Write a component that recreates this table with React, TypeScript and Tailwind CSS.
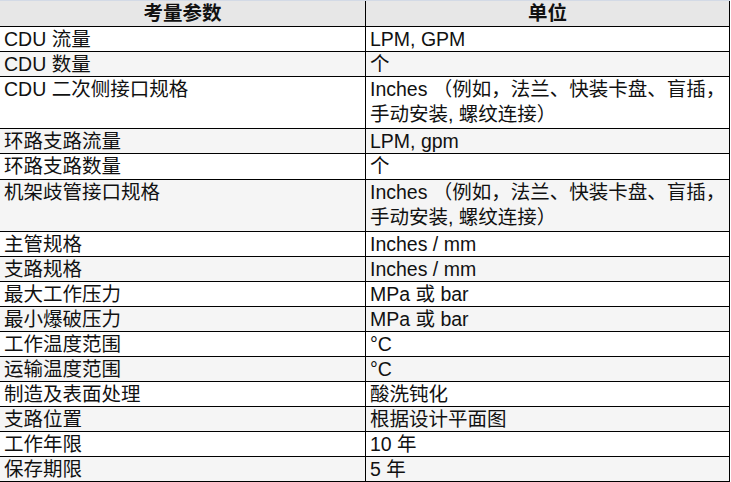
import { FC } from 'react';

// spec table: parameter / unit, rows alternate white and light gray
interface SpecRow {
  name: string;
  unit: string[];
  h: string;
}

const rows: SpecRow[] = [
  { name: 'CDU 流量', unit: ['LPM, GPM'], h: 'h-[25px]' },
  { name: 'CDU 数量', unit: ['个'], h: 'h-[25px]' },
  { name: 'CDU 二次侧接口规格', unit: ['Inches （例如，法兰、快装卡盘、盲插，', '手动安装, 螺纹连接）'], h: 'h-[52px]' },
  { name: '环路支路流量', unit: ['LPM, gpm'], h: 'h-[25px]' },
  { name: '环路支路数量', unit: ['个'], h: 'h-[26px]' },
  { name: '机架歧管接口规格', unit: ['Inches （例如，法兰、快装卡盘、盲插，', '手动安装, 螺纹连接）'], h: 'h-[52px]' },
  { name: '主管规格', unit: ['Inches / mm'], h: 'h-[25px]' },
  { name: '支路规格', unit: ['Inches / mm'], h: 'h-[25px]' },
  { name: '最大工作压力', unit: ['MPa 或 bar'], h: 'h-[25px]' },
  { name: '最小爆破压力', unit: ['MPa 或 bar'], h: 'h-[25px]' },
  { name: '工作温度范围', unit: ['°C'], h: 'h-[25px]' },
  { name: '运输温度范围', unit: ['°C'], h: 'h-[25px]' },
  { name: '制造及表面处理', unit: ['酸洗钝化'], h: 'h-[25px]' },
  { name: '支路位置', unit: ['根据设计平面图'], h: 'h-[25px]' },
  { name: '工作年限', unit: ['10 年'], h: 'h-[25px]' },
  { name: '保存期限', unit: ['5 年'], h: 'h-[25px]' },
];

const App: FC = () => {
  return (
    <div className="min-h-screen bg-white font-['Liberation_Sans','Noto_Sans_CJK_SC',sans-serif] text-[19.5px] text-[#111]">
      <div className="w-[730px]">
        {/* header */}
        <div className="flex h-[27px] border-t border-b border-t-[#d3dae6] border-b-black bg-[#e7e7e7] font-bold leading-[24px]">
          <div className="w-[366px] shrink-0 border-r border-black text-center">考量参数</div>
          <div className="w-[364px] shrink-0 border-r border-black text-center">单位</div>
        </div>

        {rows.map((row, i) => (
          <div
            key={row.name}
            className={`flex ${row.h} border-b border-black ${i % 2 === 1 ? 'bg-[#f5f5f5]' : 'bg-white'}`}
          >
            <div className="w-[366px] shrink-0 border-r border-black pl-[4px] leading-[24px]">{row.name}</div>
            <div className="w-[364px] shrink-0 border-r border-black pl-[4px] leading-[25px]">
              {row.unit.map((line) => (
                <div key={line} className="whitespace-nowrap">{line}</div>
              ))}
            </div>
          </div>
        ))}
      </div>
    </div>
  );
};

export default App;
